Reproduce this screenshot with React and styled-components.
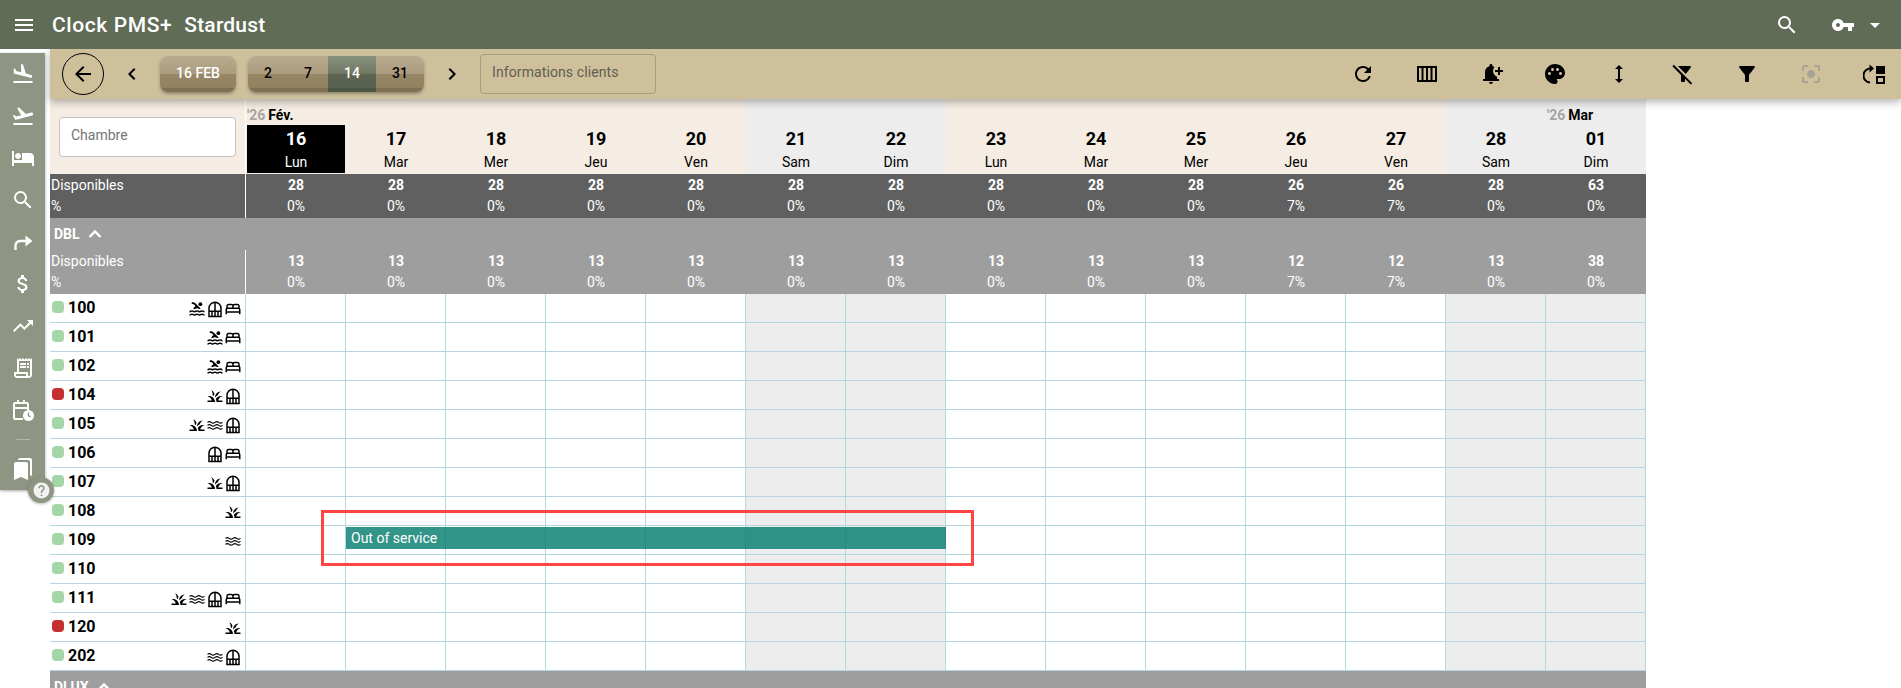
import React from 'react'
import styled, { createGlobalStyle } from 'styled-components'
import {
  MdMenu, MdSearch, MdVpnKey, MdArrowDropDown, MdArrowBack, MdChevronLeft, MdChevronRight,
  MdRefresh, MdNotificationAdd, MdPalette, MdHeight, MdFilterAltOff, MdFilterAlt,
  MdCenterFocusStrong, MdFlightLand, MdFlightTakeoff, MdHotel, MdAttachMoney, MdTrendingUp,
  MdOutlineReceiptLong, MdBookmarks, MdHelp, MdPool, MdGrass, MdOutlineBed,
} from 'react-icons/md'

const GlobalStyle = createGlobalStyle`
  html, body {
    margin: 0;
    height: 100%;
    overflow: hidden;
    background: #fff;
    font-family: Roboto, "Liberation Sans", sans-serif;
  }
  * { box-sizing: border-box; }
`

const Page = styled.div`
  height: 100vh;
  display: flex;
  flex-direction: column;
  overflow: hidden;
`

const TopBar = styled.header`
  height: 49px;
  flex: none;
  background: #606c55;
  color: #fff;
  display: flex;
  align-items: center;
  padding: 0 14px 0 12px;
  position: relative;
  z-index: 3;
`

const Title = styled.span`
  font-size: 21px;
  font-weight: 500;
  letter-spacing: ${p => p.$spacing}px;
  margin-left: ${p => p.$gap}px;
`

const TopActions = styled.div`
  margin-left: auto;
  display: flex;
  align-items: center;
  gap: 8px;
`

const Shell = styled.div`
  flex: 1;
  min-height: 0;
  display: flex;
  gap: 5px;
`

const Sidebar = styled.nav`
  position: relative;
  z-index: 4;
  flex: none;
  width: 45px;
  height: 437px;
  margin-top: 4px;
  background: #8e9683;
  color: #fff;
  box-shadow: 0 1px 3px rgba(0, 0, 0, 0.35);
  display: flex;
  flex-direction: column;
  align-items: center;
`

const SideItem = styled.div`
  height: 42px;
  width: 100%;
  display: flex;
  align-items: center;
  justify-content: center;
  font-size: 24px;
`

const SideDivider = styled.div`
  width: 14px;
  height: 1px;
  margin: 8px 0;
  background: #b2b8a8;
`

const HelpBadge = styled.div`
  position: absolute;
  right: -9px;
  bottom: -13px;
  width: 26px;
  height: 26px;
  border-radius: 50%;
  background: #8e9683;
  color: #f2f2f2;
  font-size: 19px;
  display: flex;
  align-items: center;
  justify-content: center;
  box-shadow: 0 1px 3px rgba(0, 0, 0, 0.3);
`

const Main = styled.main`
  flex: 1;
  min-width: 0;
  display: flex;
  flex-direction: column;
`

const Toolbar = styled.div`
  height: 50px;
  flex: none;
  background: #cfc09c;
  box-shadow: 0 3px 8px rgba(0, 0, 0, 0.3);
  position: relative;
  z-index: 2;
  display: flex;
  align-items: center;
  padding: 0 14px 0 12px;
  color: #000;
`

const BackButton = styled.div`
  width: 42px;
  height: 42px;
  border: 1px solid #000;
  border-radius: 50%;
  display: flex;
  align-items: center;
  justify-content: center;
  font-size: 24px;
`

const Arrow = styled.div`
  width: 24px;
  height: 24px;
  margin: 0 16px;
  font-size: 24px;
  display: flex;
`

const woodFace = `linear-gradient(#b9ab8f 0, #ab9c7e 49%, #988867 50%, #918160 88%, #7f7053 89%, #7f7053 100%)`
const greenFace = `linear-gradient(#87917c 0, #6e7863 49%, #5b6552 50%, #586250 88%, #4c5645 89%, #4c5645 100%)`

const DateButton = styled.div`
  width: 76px;
  height: 36px;
  margin-right: 12px;
  border-radius: 8px;
  background: ${woodFace};
  box-shadow: 0 2px 3px rgba(0, 0, 0, 0.3);
  color: #fff;
  font-size: 14px;
  font-weight: 500;
  display: flex;
  align-items: center;
  justify-content: center;
  padding-bottom: 3px;
`

const RangeGroup = styled.div`
  height: 36px;
  border-radius: 8px;
  overflow: hidden;
  background: ${woodFace};
  box-shadow: 0 2px 3px rgba(0, 0, 0, 0.3);
  display: flex;
`

const RangeItem = styled.div`
  width: ${p => p.$width}px;
  font-size: 14px;
  font-weight: 500;
  color: ${p => (p.$active ? '#fff' : '#000')};
  background: ${p => (p.$active ? greenFace : 'transparent')};
  display: flex;
  align-items: center;
  justify-content: center;
  padding-bottom: 3px;
`

const ClientField = styled.div`
  width: 176px;
  height: 40px;
  border: 1px solid #a99c7f;
  border-radius: 4px;
  padding: 0 11px 4px;
  color: #5f5c52;
  font-size: 14px;
  letter-spacing: 0.1px;
  display: flex;
  align-items: center;
`

const ToolIcons = styled.div`
  margin-left: auto;
  display: flex;
  gap: 40px;
`

const ToolIcon = styled.div`
  width: 24px;
  height: 24px;
  font-size: 24px;
  display: flex;
  color: ${p => (p.$off ? '#a9a394' : '#000')};
`

const Planning = styled.div`
  width: 1596px;
  flex: 1;
  min-height: 0;
  overflow: hidden;
`

const Columns = styled.div`
  display: grid;
  grid-template-columns: 196px repeat(14, 100px);
`

const RoomSearchCell = styled.div`
  height: 75px;
  background: #f5ede4;
  border-right: 1px solid #fff;
  padding: 18px 9px 0;
`

const RoomSearch = styled.div`
  width: 177px;
  height: 40px;
  background: #fff;
  border: 1px solid #c4c4c4;
  border-radius: 4px;
  padding: 0 11px 4px;
  color: #757575;
  font-size: 14px;
  display: flex;
  align-items: center;
`

const DayHead = styled.div`
  height: 75px;
  background: ${p => (p.$weekend ? '#ededed' : '#f5ede4')};
  padding: 0 1px;
`

const MonthTag = styled.div`
  height: 26px;
  padding-top: 6px;
  font-size: 14px;
  font-weight: 700;
  white-space: nowrap;
  line-height: 20px;
  color: #000;
`

const MonthYear = styled.span`
  color: #a5a5a5;
  margin-right: 3px;
`

const DayBox = styled.div`
  height: 48px;
  background: ${p => (p.$today ? '#000' : 'transparent')};
  color: ${p => (p.$today ? '#fff' : '#000')};
  text-align: center;
`

const DayNumber = styled.div`
  font-size: 18px;
  font-weight: 700;
  line-height: 27px;
`

const DayName = styled.div`
  font-size: 14px;
  line-height: 21px;
`

const StatLabel = styled.div`
  height: 44px;
  padding-left: 1px;
  background: ${p => p.$bg};
  color: #fff;
  border-right: 1px solid #fff;
  font-size: 14px;
  line-height: 21px;
  padding-top: 1px;
`

const StatCell = styled.div`
  height: 44px;
  background: ${p => p.$bg};
  color: #fff;
  font-size: 14px;
  line-height: 21px;
  padding-top: 1px;
  text-align: center;
`

const StatValue = styled.div`
  font-weight: 700;
`

const GroupTitle = styled.div`
  height: 32px;
  background: #9e9e9e;
  color: #fff;
  font-size: 14px;
  font-weight: 700;
  padding-left: 4px;
  display: flex;
  align-items: center;
  gap: 7px;
`

const Room = styled(Columns)`
  position: relative;
  height: 29px;
  z-index: ${p => (p.$raised ? 1 : 'auto')};
`

const RoomName = styled.div`
  border-right: 1px solid #b5d5e0;
  border-bottom: 1px solid #b5d5e0;
  display: flex;
  align-items: center;
  padding: 0 3px 2px 2px;
`

const StatusDot = styled.span`
  width: 12px;
  height: 12px;
  border-radius: 4px;
  background: ${p => (p.$busy ? '#c62f2f' : '#a5d6a7')};
  margin-right: 4px;
`

const RoomNumber = styled.span`
  font-size: 16px;
  font-weight: 700;
  color: #000;
`

const Features = styled.div`
  margin-left: auto;
  display: flex;
  font-size: 18px;
  padding-top: 3px;
  color: #000;
`

const GridCell = styled.div`
  background: ${p => (p.$weekend ? '#ededed' : '#fff')};
  border-right: 1px solid #b5d5e0;
  border-bottom: 1px solid #b5d5e0;
`

const Booking = styled.div`
  position: absolute;
  left: 296px;
  top: 1px;
  width: 600px;
  height: 22px;
  background: rgba(0, 121, 107, 0.8);
  color: #fff;
  font-size: 14px;
  padding-left: 5px;
  line-height: 23px;
`

const Highlight = styled.div`
  position: absolute;
  left: 271px;
  top: -16px;
  width: 653px;
  height: 56px;
  border: 3px solid #ff4444;
  pointer-events: none;
`

const ChevronUp = () => (
  <svg width="16" height="16" viewBox="0 0 16 16" fill="none" stroke="#fff" strokeWidth="2.4">
    <path d="M2.500 11l5.500-5.500 5.500 5.500" />
  </svg>
)

const WindowIcon = () => (
  <svg width="18" height="18" viewBox="0 0 24 24" fill="none" stroke="#000" strokeWidth="2">
    <path d="M4 22V11a8 8 0 0 1 16 0v11z" />
    <path d="M12 3v19M4 15h16M8 15v7M16 15v7" />
  </svg>
)

const WavesIcon = () => (
  <svg width="18" height="18" viewBox="0 0 24 24" fill="none" stroke="#000" strokeWidth="1.600">
    <path d="M2 8.500q2.500-2 5 0t5 0 5 0 5 0" />
    <path d="M2 12.500q2.500-2 5 0t5 0 5 0 5 0" />
    <path d="M2 16.500q2.500-2 5 0t5 0 5 0 5 0" />
  </svg>
)

const CalendarClock = () => (
  <svg width="24" height="24" viewBox="0 0 24 24" fill="none">
    <path d="M17 12V6a1 1 0 0 0-1-1H4a1 1 0 0 0-1 1v14a1 1 0 0 0 1 1h8" stroke="#fff" strokeWidth="2" />
    <path d="M3 10h14M7 2v4M13 2v4" stroke="#fff" strokeWidth="2" />
    <circle cx="17.500" cy="17.500" r="5.500" fill="#fff" />
    <path d="M17.500 14.500v3.200l2 1.200" stroke="#8e9683" strokeWidth="1.300" />
  </svg>
)

const TurnArrow = () => (
  <svg width="24" height="24" viewBox="0 0 24 24" fill="none">
    <path d="M4.500 20v-4.500a4.500 4.500 0 0 1 4.500-4.500h7" stroke="#fff" strokeWidth="2.400" />
    <path d="M14.500 5.500l7 5.500-7 5.500z" fill="#fff" />
  </svg>
)

const ColumnsIcon = () => (
  <svg width="24" height="24" viewBox="0 0 24 24" fill="none" stroke="#000" strokeWidth="2">
    <path d="M3 5h18v14H3zM7.500 5v14M12 5v14M16.500 5v14" />
  </svg>
)

const SwitchLayout = () => (
  <svg width="24" height="24" viewBox="0 0 24 24" fill="none">
    <path d="M8 6.500a7 7 0 0 0-1 14" stroke="#000" strokeWidth="2" />
    <path d="M6.500 2.500l4.500 4-4.500 4z" fill="#000" />
    <path d="M13 4h9v8h-9z" fill="#000" />
    <path d="M14 15h7v6h-7z" stroke="#000" strokeWidth="2" />
  </svg>
)

const featureIcons = {
  pool: <MdPool />,
  window: <WindowIcon />,
  bed: <MdOutlineBed />,
  grass: <MdGrass />,
  waves: <WavesIcon />,
}

const days = [
  ['16', 'Lun', 28, '0%', 13, '0%'],
  ['17', 'Mar', 28, '0%', 13, '0%'],
  ['18', 'Mer', 28, '0%', 13, '0%'],
  ['19', 'Jeu', 28, '0%', 13, '0%'],
  ['20', 'Ven', 28, '0%', 13, '0%'],
  ['21', 'Sam', 28, '0%', 13, '0%', true],
  ['22', 'Dim', 28, '0%', 13, '0%', true],
  ['23', 'Lun', 28, '0%', 13, '0%'],
  ['24', 'Mar', 28, '0%', 13, '0%'],
  ['25', 'Mer', 28, '0%', 13, '0%'],
  ['26', 'Jeu', 26, '7%', 12, '7%'],
  ['27', 'Ven', 26, '7%', 12, '7%'],
  ['28', 'Sam', 28, '0%', 13, '0%', true],
  ['01', 'Dim', 63, '0%', 38, '0%', true],
]

const rooms = [
  ['100', false, ['pool', 'window', 'bed']],
  ['101', false, ['pool', 'bed']],
  ['102', false, ['pool', 'bed']],
  ['104', true, ['grass', 'window']],
  ['105', false, ['grass', 'waves', 'window']],
  ['106', false, ['window', 'bed']],
  ['107', false, ['grass', 'window']],
  ['108', false, ['grass']],
  ['109', false, ['waves']],
  ['110', false, []],
  ['111', false, ['grass', 'waves', 'window', 'bed']],
  ['120', true, ['grass']],
  ['202', false, ['waves', 'window']],
]

const sideIcons = [
  <MdFlightLand />, <MdFlightTakeoff />, <MdHotel />, <MdSearch />, <TurnArrow />,
  <MdAttachMoney />, <MdTrendingUp />, <MdOutlineReceiptLong />, <CalendarClock />,
]

const toolIcons = [
  <MdRefresh />, <ColumnsIcon />, <MdNotificationAdd />, <MdPalette />, <MdHeight />,
  <MdFilterAltOff />, <MdFilterAlt />,
]

const App = () => (
  <Page>
    <GlobalStyle />
    <TopBar>
      <MdMenu size={24} />
      <Title $gap={16} $spacing={0.6}>Clock PMS+</Title>
      <Title $gap={12} $spacing={0.2}>Stardust</Title>
      <TopActions>
        <MdSearch size={24} style={{ marginRight: 24 }} />
        <MdVpnKey size={24} />
        <MdArrowDropDown size={24} />
      </TopActions>
    </TopBar>
    <Shell>
      <Sidebar>
        {sideIcons.map((icon, i) => <SideItem key={i}>{icon}</SideItem>)}
        <SideDivider />
        <SideItem><MdBookmarks /></SideItem>
        <HelpBadge><MdHelp /></HelpBadge>
      </Sidebar>
      <Main>
        <Toolbar>
          <BackButton><MdArrowBack /></BackButton>
          <Arrow><MdChevronLeft /></Arrow>
          <DateButton>16 FEB</DateButton>
          <RangeGroup>
            <RangeItem $width={40}>2</RangeItem>
            <RangeItem $width={40}>7</RangeItem>
            <RangeItem $width={48} $active>14</RangeItem>
            <RangeItem $width={48}>31</RangeItem>
          </RangeGroup>
          <Arrow><MdChevronRight /></Arrow>
          <ClientField>Informations clients</ClientField>
          <ToolIcons>
            {toolIcons.map((icon, i) => <ToolIcon key={i}>{icon}</ToolIcon>)}
            <ToolIcon $off><MdCenterFocusStrong /></ToolIcon>
            <ToolIcon><SwitchLayout /></ToolIcon>
          </ToolIcons>
        </Toolbar>
        <Planning>
          <Columns>
            <RoomSearchCell><RoomSearch>Chambre</RoomSearch></RoomSearchCell>
            {days.map((d, i) => (
              <DayHead key={d[0]} $weekend={d[6]}>
                <MonthTag>
                  {i === 0 && <><MonthYear>'26</MonthYear>Fév.</>}
                  {i === 13 && <><MonthYear>'26</MonthYear>Mar</>}
                </MonthTag>
                <DayBox $today={i === 0}>
                  <DayNumber>{d[0]}</DayNumber>
                  <DayName>{d[1]}</DayName>
                </DayBox>
              </DayHead>
            ))}
            <StatLabel $bg="#606060">Disponibles<br />%</StatLabel>
            {days.map(d => (
              <StatCell key={d[0]} $bg="#606060">
                <StatValue>{d[2]}</StatValue>
                {d[3]}
              </StatCell>
            ))}
          </Columns>
          <GroupTitle>DBL <ChevronUp /></GroupTitle>
          <Columns>
            <StatLabel $bg="#9e9e9e">Disponibles<br />%</StatLabel>
            {days.map(d => (
              <StatCell key={d[0]} $bg="#9e9e9e">
                <StatValue>{d[4]}</StatValue>
                {d[5]}
              </StatCell>
            ))}
          </Columns>
          {rooms.map(([number, busy, features]) => (
            <Room key={number} $raised={number === '109'}>
              <RoomName>
                <StatusDot $busy={busy} />
                <RoomNumber>{number}</RoomNumber>
                <Features>
                  {features.map(f => <React.Fragment key={f}>{featureIcons[f]}</React.Fragment>)}
                </Features>
              </RoomName>
              {days.map(d => <GridCell key={d[0]} $weekend={d[6]} />)}
              {number === '109' && (
                <>
                  <Booking>Out of service</Booking>
                  <Highlight />
                </>
              )}
            </Room>
          ))}
          <GroupTitle>DLUX <ChevronUp /></GroupTitle>
        </Planning>
      </Main>
    </Shell>
  </Page>
)

export default App
